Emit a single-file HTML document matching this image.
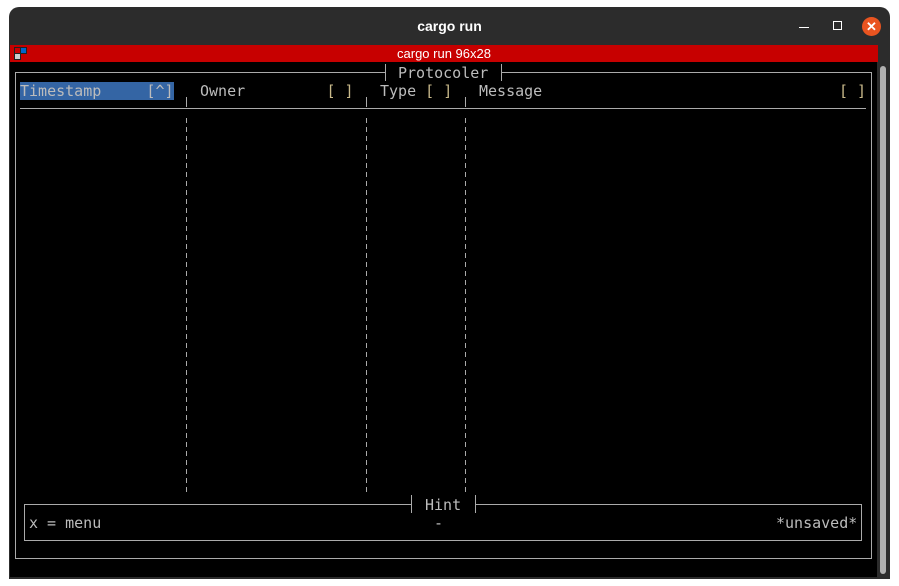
<!DOCTYPE html>
<html><head><style>
body{margin:0;width:899px;height:586px;background:#fff;position:relative;overflow:hidden;font-family:"DejaVu Sans Mono","Liberation Mono",monospace;}
.win{position:absolute;left:9px;top:7px;width:881px;height:572px;background:#2c2c2c;border-radius:10px 10px 0 0;}
.title{position:absolute;left:0;top:18px;width:899px;text-align:center;color:#fff;font:bold 14px "Liberation Sans",sans-serif;}
.red{position:absolute;left:10px;top:45px;width:868px;height:17px;background:#c70000;color:#fff;font:13px "Liberation Sans",sans-serif;text-align:center;line-height:17px;}
.term{position:absolute;left:10px;top:62px;width:867px;height:515px;background:#000;}
.sb{position:absolute;left:877px;top:62px;width:12px;height:515px;background:#2c2c2c;}
.sbt{position:absolute;left:880px;top:66px;width:6px;height:508px;background:#b0b0b0;border-radius:3px;}
.t{position:absolute;color:#bcbcbc;font-size:15px;line-height:18px;white-space:pre;}
.y{color:#c8b98a}
.l{position:absolute;background:#aaa;}
.d{position:absolute;width:1px;background:repeating-linear-gradient(#aaa 0 5px,transparent 5px 9px);}
</style></head><body>
<div class="win"></div>
<div class="title">cargo run</div>
<div style="position:absolute;left:799px;top:27px;width:10px;height:1px;background:#fff"></div>
<div style="position:absolute;left:833px;top:21px;width:7px;height:7px;border:1px solid #fff"></div>
<div style="position:absolute;left:862px;top:17px;width:19px;height:19px;border-radius:50%;background:#e95420;color:#fff;font:bold 13px 'Liberation Sans';text-align:center;line-height:19px">✕</div>
<div class="red">cargo run 96x28</div>
<div style="position:absolute;left:14px;top:47px;width:6px;height:5px;background:#c00;border:1px solid #222"></div>
<div style="position:absolute;left:20px;top:47px;width:5px;height:5px;background:#06c;border:1px solid #222"></div>
<div style="position:absolute;left:14px;top:53px;width:5px;height:5px;background:#ccc;border:1px solid #222"></div>
<div class="term"></div>
<div class="sb"></div><div class="sbt"></div>
<div style="position:absolute;left:15px;top:72px;width:855px;height:485px;border:1px solid #aaa"></div>
<div style="position:absolute;left:385px;top:64px;width:116px;height:18px;background:#000"></div>
<div class="l" style="left:385px;top:64px;width:1px;height:17px"></div>
<div class="l" style="left:501px;top:64px;width:1px;height:17px"></div>
<div class="t" style="left:398px;top:64px">Protocoler</div>
<div style="position:absolute;left:20px;top:82px;width:154px;height:18px;background:#3465a4"></div>
<div class="t" style="left:20px;top:82px">Timestamp     [^]</div>
<div class="t" style="left:200px;top:82px">Owner         <span class="y">[ ]</span></div>
<div class="t" style="left:380px;top:82px">Type <span class="y">[ ]</span></div>
<div class="t" style="left:479px;top:82px">Message</div>
<div class="t y" style="left:839px;top:82px">[ ]</div>
<div class="l" style="left:186px;top:97px;width:1px;height:10px"></div>
<div class="l" style="left:366px;top:97px;width:1px;height:10px"></div>
<div class="l" style="left:465px;top:97px;width:1px;height:10px"></div>
<div class="l" style="left:20px;top:108px;width:846px;height:1px"></div>
<div class="d" style="left:186px;top:118px;height:377px"></div>
<div class="d" style="left:366px;top:118px;height:377px"></div>
<div class="d" style="left:465px;top:118px;height:377px"></div>
<div style="position:absolute;left:24px;top:504px;width:836px;height:35px;border:1px solid #aaa"></div>
<div style="position:absolute;left:411px;top:495px;width:64px;height:16px;background:#000"></div>
<div class="l" style="left:411px;top:495px;width:1px;height:18px"></div>
<div class="l" style="left:475px;top:495px;width:1px;height:18px"></div>
<div class="t" style="left:425px;top:496px">Hint</div>
<div class="t" style="left:29px;top:514px">x = menu</div>
<div class="t" style="left:434px;top:514px">-</div>
<div class="t" style="left:776px;top:514px">*unsaved*</div>
</body></html>
